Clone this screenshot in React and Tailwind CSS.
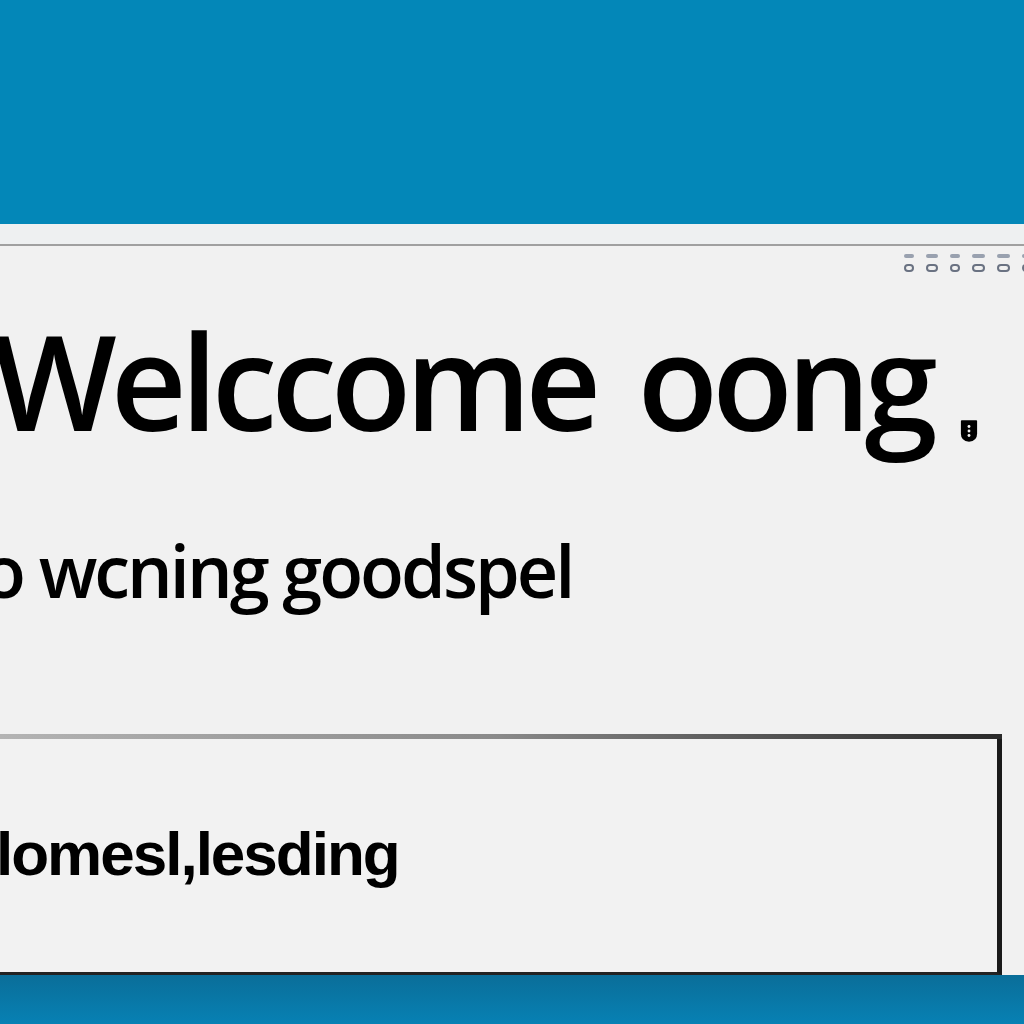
import React from 'react';

function ShieldIcon() {
  return (
    <svg width="18" height="26" viewBox="0 0 20 26" className="text-black">
      <path d="M1 2 Q1 1 2 1 L18 1 Q19 1 19 2 L19 16 Q19 24 10 25 Q1 24 1 16 Z" fill="currentColor" />
      <circle cx="10" cy="8" r="1.6" fill="#f1f1f1" />
      <circle cx="10" cy="13" r="1.6" fill="#f1f1f1" />
      <circle cx="10" cy="18" r="1.6" fill="#f1f1f1" />
    </svg>
  );
}

function ToolbarGlyphs() {
  // tiny gray controls in the top-right corner
  const widths = ['w-[10px]', 'w-[12px]', 'w-[10px]', 'w-[13px]', 'w-[13px]', 'w-[12px]'];
  return (
    <div className="flex flex-col gap-[6px]">
      <div className="flex gap-[12px]">
        {widths.map((w, i) => (
          <span key={i} className={`${w} h-[4px] rounded-sm bg-gray-400`} />
        ))}
      </div>
      <div className="flex gap-[12px]">
        {widths.map((w, i) => (
          <span key={i} className={`${w} h-[8px] rounded-sm border-2 border-gray-500`} />
        ))}
      </div>
    </div>
  );
}

export default function App() {
  return (
    <div className="w-full h-[1024px] overflow-hidden flex flex-col bg-[#0387b8]">
      <div className="h-[224px] bg-[#0387b8]" />

      <div className="h-[751px] bg-[#f1f1f1] flex flex-col">
        <div className="h-[22px] bg-[#eef0f1] border-b-2 border-[#a0a0a0]" />

        <div className="relative flex-1 flex flex-col">
          <div className="absolute right-[-10px] top-[8px]">
            <ToolbarGlyphs />
          </div>

          <div className="flex items-end mt-[68px] ml-[-8px]">
            <h1 className="text-[132px] leading-none font-semibold text-black tracking-[-6px] [word-spacing:14px] whitespace-nowrap" style={{ fontFamily: '"Open Sans", sans-serif' }}>
              Welccome oong
            </h1>
            <div className="ml-[28px] mb-[2px]">
              <ShieldIcon />
            </div>
          </div>

          <p className="mt-[88px] ml-[-18px] text-[72px] leading-none font-semibold text-black tracking-[-3px] whitespace-nowrap" style={{ fontFamily: '"Open Sans", sans-serif' }}>
            o wcning goodspel
          </p>

          <div className="mt-[128px] ml-[-10px] w-[1012px] flex-1 flex flex-col">
            <div className="h-[5px] bg-gradient-to-r from-[#b5b5b5] via-[#8a8a8a] to-[#2a2a2a]" />
            <div className="flex-1 border-r-[5px] border-b-[3px] border-r-[#1a1a1a] border-b-[#222] bg-[#f2f2f2] flex items-center">
              <span className="ml-[6px] mt-[-4px] text-[62px] leading-none font-bold tracking-[-2px] text-black whitespace-nowrap" style={{ fontFamily: '"Liberation Sans", sans-serif' }}>
                lomesl,lesding
              </span>
            </div>
          </div>
        </div>
      </div>

      <div className="flex-1 bg-gradient-to-b from-[#0a6e99] to-[#0781b4]" />
    </div>
  );
}
